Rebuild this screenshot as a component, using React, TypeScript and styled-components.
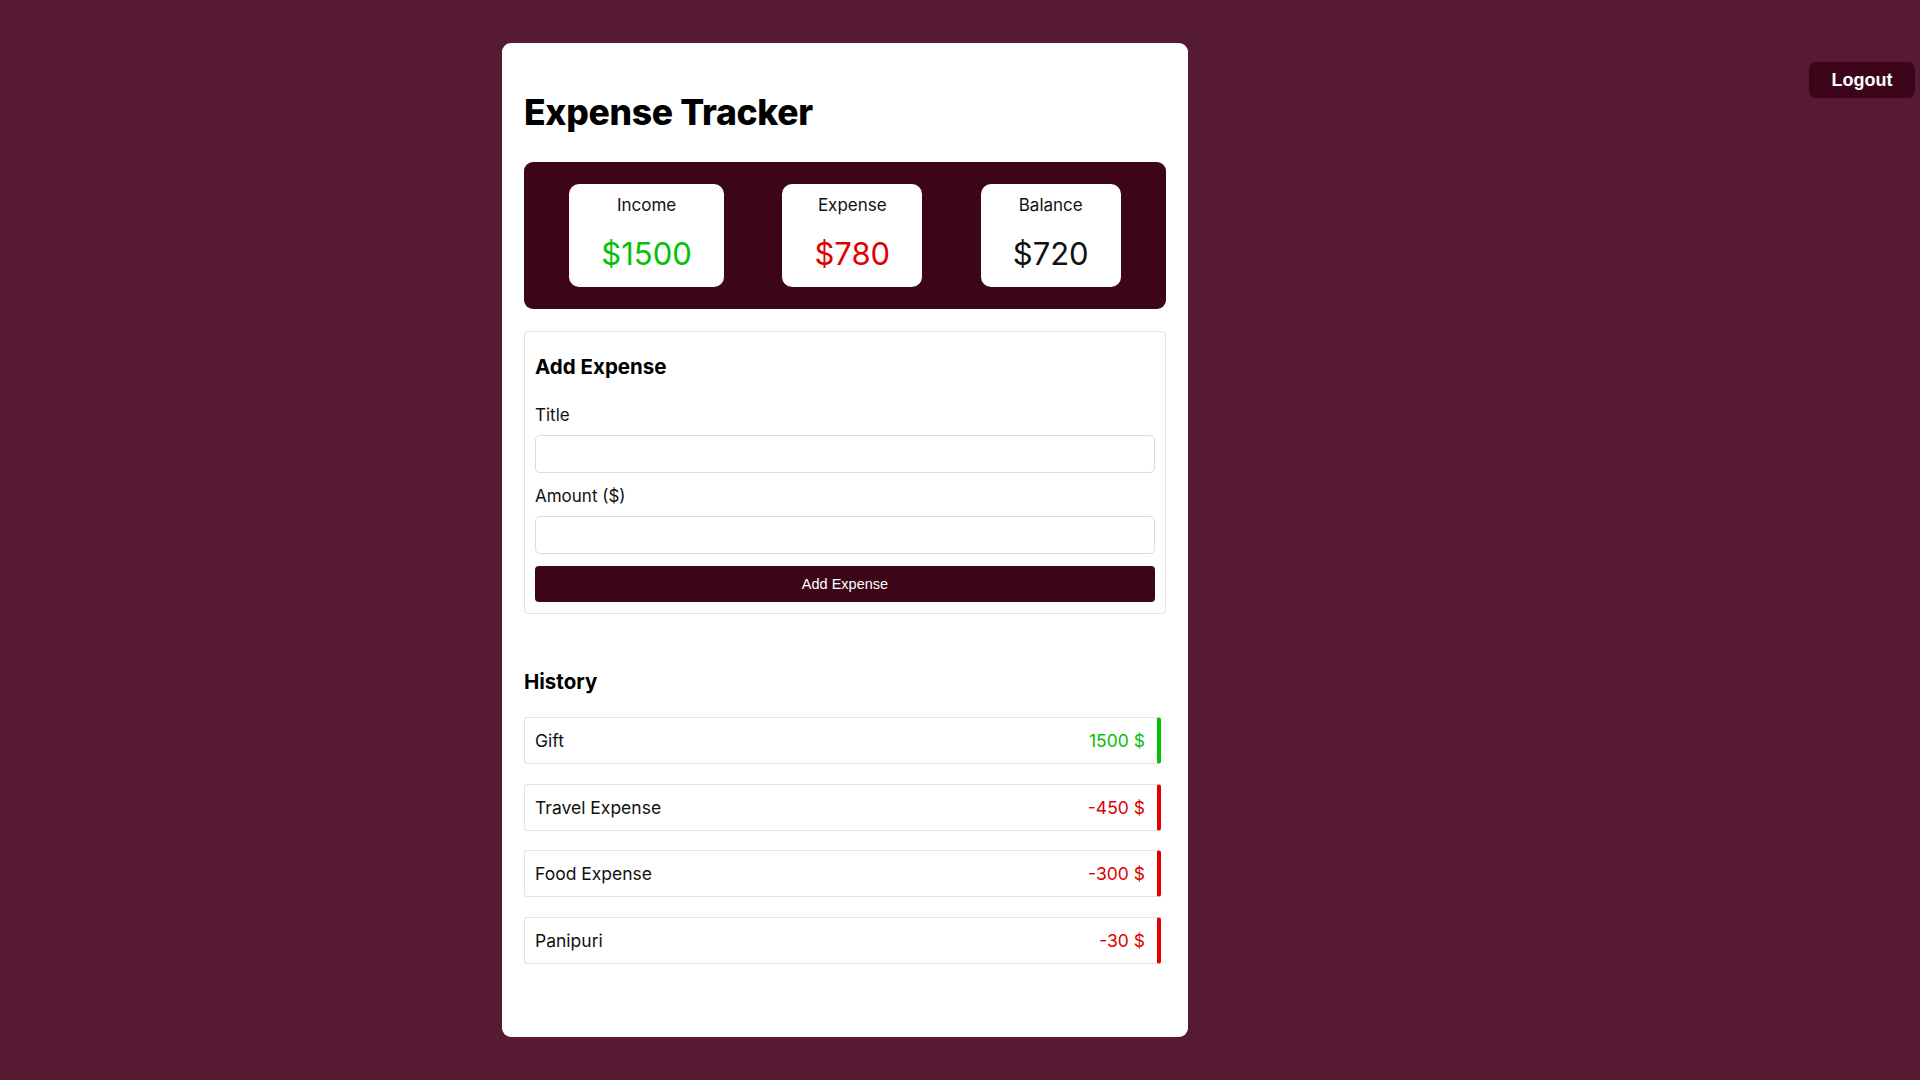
import React from "react";
import styled, { createGlobalStyle } from "styled-components";

const GlobalStyle = createGlobalStyle`
  * {
    box-sizing: border-box;
  }
  html, body {
    margin: 0;
    padding: 0;
    background: #561b33;
    font-family: "Inter", "Noto Sans", sans-serif;
    color: #111;
  }
`;

const Page = styled.div`
  display: grid;
  grid-template-columns: 502px 686px 1fr;
  align-items: start;
  min-height: 1080px;
  padding-top: 43px;
`;

const Card = styled.main`
  grid-column: 2;
  background: #fff;
  border-radius: 9px;
  padding: 26px 22px 60px;
  min-height: 994px;
  display: flex;
  flex-direction: column;
`;

const Title = styled.h1`
  margin: 22px 0 27px;
  font-size: 35.5px;
  line-height: 44px;
  font-weight: 800;
  letter-spacing: -0.3px;
  color: #000;
`;

const StatsPanel = styled.section`
  background: #3c051a;
  border-radius: 9px;
  padding: 22px 16px;
  display: flex;
  justify-content: space-around;
`;

const StatBox = styled.div`
  background: #fff;
  border-radius: 10px;
  padding: 8px 32px 11px;
  display: flex;
  flex-direction: column;
  align-items: center;
  gap: 14px;
`;

const StatLabel = styled.div`
  font-size: 17px;
  line-height: 26px;
  color: #111;
`;

const StatValue = styled.div<{ $tone: "green" | "red" | "black" }>`
  font-size: 31px;
  line-height: 44px;
  font-weight: 400;
  color: ${(p) =>
    p.$tone === "green" ? "#05c105" : p.$tone === "red" ? "#e00000" : "#111"};
`;

const FormBox = styled.section`
  margin-top: 22px;
  border: 1px solid #e2e2e2;
  border-radius: 4px;
  padding: 11px 10px;
  display: flex;
  flex-direction: column;
`;

const SectionTitle = styled.h2`
  margin: 12px 0 0;
  font-size: 20.5px;
  line-height: 24px;
  font-weight: 700;
  color: #000;
`;

const Label = styled.label`
  display: block;
  margin-top: ${(p: { $first?: boolean }) => (p.$first ? "24px" : "11px")};
  font-size: 17px;
  line-height: 24px;
  color: #111;
`;

const Input = styled.input`
  display: block;
  width: 100%;
  height: 38px;
  margin-top: 8px;
  border: 1px solid #dcdcdc;
  border-radius: 5px;
  padding: 0 10px;
  font: inherit;
  outline: none;
`;

const SubmitButton = styled.button`
  margin-top: 12px;
  height: 36px;
  width: 100%;
  border: none;
  border-radius: 4px;
  background: #3c051a;
  color: #fff;
  font-family: "Liberation Sans", Arial, sans-serif;
  font-size: 14.5px;
  cursor: pointer;
`;

const HistoryTitle = styled(SectionTitle)`
  margin-top: 56px;
`;

const HistoryList = styled.ul`
  list-style: none;
  margin: 23px 0 0;
  padding: 0;
  display: flex;
  flex-direction: column;
  gap: 19.5px;
`;

const HistoryRow = styled.li<{ $income: boolean }>`
  height: 47px;
  margin-right: 5px;
  border: 1px solid #e3e3e3;
  border-right: 4px solid ${(p) => (p.$income ? "#05c105" : "#e00000")};
  border-radius: 3px;
  padding: 0 12px 0 10px;
  display: flex;
  align-items: center;
  justify-content: space-between;
  font-size: 17.5px;
`;

const RowAmount = styled.span<{ $income: boolean }>`
  color: ${(p) => (p.$income ? "#05c105" : "#e00000")};
`;

const LogoutButton = styled.button`
  grid-column: 3;
  justify-self: end;
  margin: 19px 5px 0 0;
  height: 36px;
  width: 106px;
  border: none;
  border-radius: 7px;
  background: #3c051a;
  color: #fff;
  font-family: "Liberation Sans", Arial, sans-serif;
  font-weight: 700;
  font-size: 18px;
  cursor: pointer;
`;

const history = [
  { title: "Gift", amount: 1500 },
  { title: "Travel Expense", amount: -450 },
  { title: "Food Expense", amount: -300 },
  { title: "Panipuri", amount: -30 },
];

export default function App() {
  return (
    <>
      <GlobalStyle />
      <Page>
        <Card>
          <Title>Expense Tracker</Title>
          <StatsPanel>
            <StatBox>
              <StatLabel>Income</StatLabel>
              <StatValue $tone="green">$1500</StatValue>
            </StatBox>
            <StatBox>
              <StatLabel>Expense</StatLabel>
              <StatValue $tone="red">$780</StatValue>
            </StatBox>
            <StatBox>
              <StatLabel>Balance</StatLabel>
              <StatValue $tone="black">$720</StatValue>
            </StatBox>
          </StatsPanel>

          <FormBox>
            <SectionTitle>Add Expense</SectionTitle>
            <Label $first htmlFor="title">
              Title
            </Label>
            <Input id="title" type="text" />
            <Label htmlFor="amount">Amount ($)</Label>
            <Input id="amount" type="number" />
            <SubmitButton type="button">Add Expense</SubmitButton>
          </FormBox>

          <HistoryTitle>History</HistoryTitle>
          <HistoryList>
            {history.map((item) => (
              <HistoryRow key={item.title} $income={item.amount > 0}>
                <span>{item.title}</span>
                <RowAmount $income={item.amount > 0}>
                  {item.amount} $
                </RowAmount>
              </HistoryRow>
            ))}
          </HistoryList>
        </Card>
        <LogoutButton type="button">Logout</LogoutButton>
      </Page>
    </>
  );
}
